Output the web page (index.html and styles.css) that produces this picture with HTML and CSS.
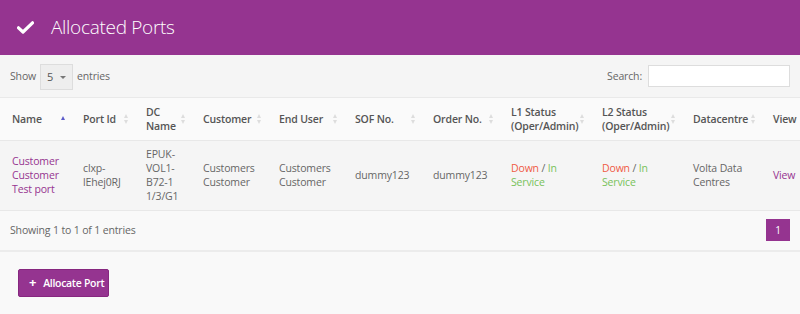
FILE: index.html
```html
<!DOCTYPE html>
<html>
<head>
<meta charset="utf-8">
<link rel="stylesheet" href="styles.css">
</head>
<body>
<div class="panel">
  <div class="panel-heading">
    <svg class="check" width="17" height="13" viewBox="0 0 17 13"><path d="M1.5 6.8 L6 11 L15.5 1.8" fill="none" stroke="#fff" stroke-width="3.2" stroke-linecap="round" stroke-linejoin="round"/></svg>
    <h1 class="title">Allocated Ports</h1>
  </div>
  <div class="toolbar">
    <div class="length">Show <span class="select">5<span class="caret"></span></span> entries</div>
    <div class="search">Search: <span class="search-input"></span></div>
  </div>
  <div class="table-wrap">
    <table class="grid">
      <colgroup>
        <col style="width:71px"><col style="width:63px"><col style="width:57px"><col style="width:76px"><col style="width:76px"><col style="width:78px"><col style="width:78px"><col style="width:91px"><col style="width:91px"><col style="width:80px"><col style="width:60px">
      </colgroup>
      <thead>
        <tr>
          <th class="sorted">Name<span class="sort up"></span></th>
          <th>Port Id<span class="sort"></span></th>
          <th>DC Name<span class="sort"></span></th>
          <th>Customer<span class="sort"></span></th>
          <th>End User<span class="sort"></span></th>
          <th>SOF No.<span class="sort"></span></th>
          <th>Order No.<span class="sort"></span></th>
          <th>L1 Status (Oper/Admin)<span class="sort"></span></th>
          <th>L2 Status (Oper/Admin)<span class="sort"></span></th>
          <th>Datacentre<span class="sort"></span></th>
          <th>View<span class="sort"></span></th>
        </tr>
      </thead>
      <tbody>
        <tr>
          <td><a class="link">Customer Customer Test port</a></td>
          <td>clxp-lEhej0RJ</td>
          <td class="dc">EPUK-VOL1-B72-11/3/G1</td>
          <td>Customers Customer</td>
          <td>Customers Customer</td>
          <td>dummy123</td>
          <td>dummy123</td>
          <td><span class="down">Down</span> / <span class="up-s">In</span> <span class="up-s">Service</span></td>
          <td><span class="down">Down</span> / <span class="up-s">In</span> <span class="up-s">Service</span></td>
          <td>Volta Data Centres</td>
          <td><a class="link">View</a></td>
        </tr>
      </tbody>
    </table>
  </div>
  <div class="table-footer">
    <div class="info">Showing 1 to 1 of 1 entries</div>
    <span class="page">1</span>
  </div>
  <div class="actions">
    <button class="btn"><span class="plus">+</span>Allocate Port</button>
  </div>
</div>
</body>
</html>
```
FILE: styles.css
```css
* { box-sizing: border-box; }
html, body { margin: 0; padding: 0; background: #f9f9f9; }
body { font-family: "Open Sans", "DejaVu Sans", sans-serif; font-size: 10.5px; letter-spacing: -0.15px; color: #666; width: 800px; height: 314px; overflow: hidden; }
.panel-heading { background: #953490; height: 55px; display: flex; align-items: center; padding-left: 17px; }
.check { display: block; margin-right: 17px; margin-top: 0; }
.title { margin: 0 0 2px 0; font-weight: 300; font-size: 19px; color: #fff; letter-spacing: -0.3px; }
.toolbar { background: #f5f5f5; height: 43px; display: flex; justify-content: space-between; align-items: center; padding: 0 10px; border-bottom: 1px solid #e9e9e9; }
.length { display: flex; align-items: center; }
.select { display: inline-flex; align-items: center; width: 33px; height: 26px; margin: 1px 4px 0 4px; background: #eee; border: 1px solid #ddd; padding-left: 6px; font-size: 11px; color: #555; position: relative; }
.caret { position: absolute; right: 6px; top: 11px; border-left: 3px solid transparent; border-right: 3px solid transparent; border-top: 3px solid #777; }
.search { display: flex; align-items: center; }
.search-input { display: inline-block; width: 142px; height: 22px; background: #fff; border: 1px solid #ddd; margin-left: 6px; }
.table-wrap { width: 800px; overflow: hidden; }
.grid { table-layout: fixed; border-collapse: collapse; width: 821px; }
.grid th { text-align: left; font-weight: 600; color: #555; padding: 6px 14px 6px 12px; height: 42px; vertical-align: middle; line-height: 14px; position: relative; background: #fafafa; border-bottom: 1px solid #e8e8e8; }
.sort { position: absolute; right: 5px; top: 50%; margin-top: -5px; width: 5px; height: 10px; }
.sort::before, .sort::after { content: ""; position: absolute; left: 0; border-left: 2.5px solid transparent; border-right: 2.5px solid transparent; }
.sort::before { top: 0; border-bottom: 4px solid #ddd; }
.sort::after { bottom: 0; border-top: 4px solid #ddd; }
.sort.up::after { display: none; }
.sort.up::before { top: 2px; border-bottom-color: #5b5bc9; }
.grid td { padding: 6px 4px 6px 12px; height: 70px; vertical-align: middle; line-height: 14.3px; background: #f5f5f5; border-bottom: 1px solid #e8e8e8; overflow-wrap: anywhere; }
.grid td.dc { padding-right: 12px; word-break: break-all; }
.link { color: #953490; text-decoration: none; }
.down { color: #f05a45; }
.up-s { color: #78c25a; }
.table-footer { height: 41px; display: flex; justify-content: space-between; align-items: center; padding: 0 10px; border-bottom: 2px solid #ececec; }
.page { width: 24px; height: 22px; background: #953490; color: #fff; display: flex; align-items: center; justify-content: center; font-size: 10px; }
.actions { padding: 17px 18px; }
.btn { display: flex; align-items: center; white-space: nowrap; height: 28px; width: 91px; background: #953490; border: 1px solid #86277f; border-radius: 2px; color: #fff; font-family: "Open Sans", sans-serif; font-weight: 600; font-size: 10.5px; letter-spacing: -0.3px; padding: 0 0 0 10px; }
.plus { font-weight: 700; font-size: 13px; margin-right: 7px; line-height: 1; }
```
